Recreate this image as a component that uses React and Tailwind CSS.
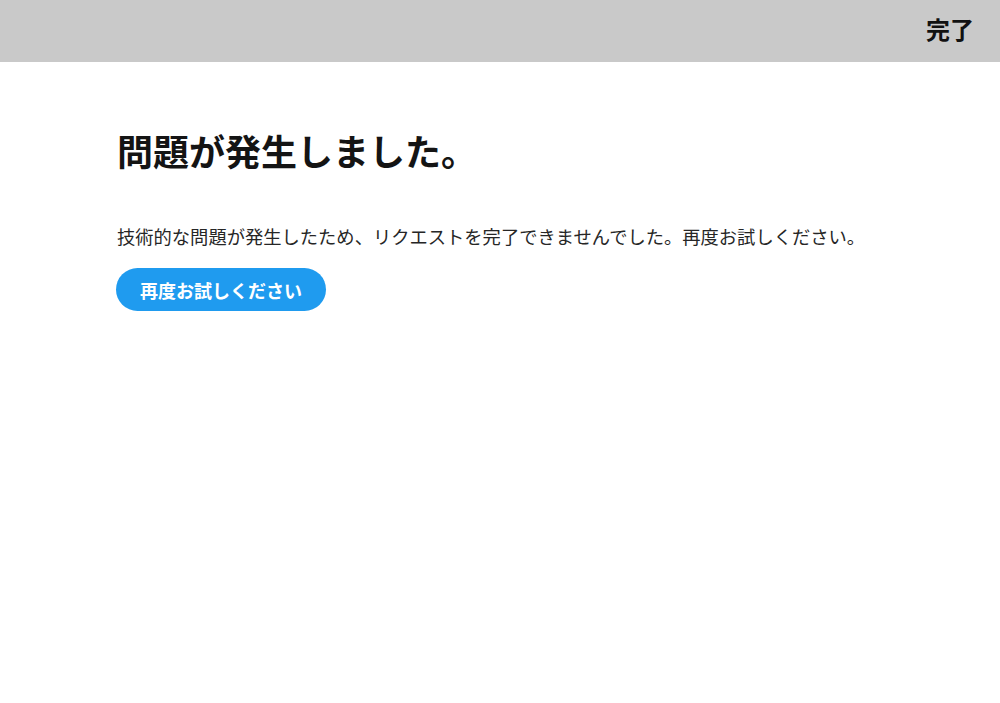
import React from "react";

const jp = {
  fontFamily: '"Noto Sans CJK JP", "Noto Sans", sans-serif',
};

const App = () => {
  return (
    <div className="min-h-screen bg-white text-[#141414]" style={jp}>
      {/* Top bar */}
      <div className="h-[62px] bg-[#c9c9c9] flex items-center justify-end pr-[26px]">
        <button className="text-[24px] font-bold leading-none text-[#111] -mt-[4px]">
          完了
        </button>
      </div>

      {/* Error message */}
      <div className="pl-[117px] pt-[64px]">
        <h1 className="text-[36px] font-bold leading-[48px]">
          問題が発生しました。
        </h1>
        <p className="mt-[49px] text-[18.3px] leading-[26px] text-[#262626]">
          技術的な問題が発生したため、リクエストを完了できませんでした。再度お試しください。
        </p>
        <button className="mt-[19px] -ml-px h-[43px] px-[24px] rounded-full bg-[#1f9bef] text-white text-[18px] font-bold leading-none">
          再度お試しください
        </button>
      </div>
    </div>
  );
};

export default App;
